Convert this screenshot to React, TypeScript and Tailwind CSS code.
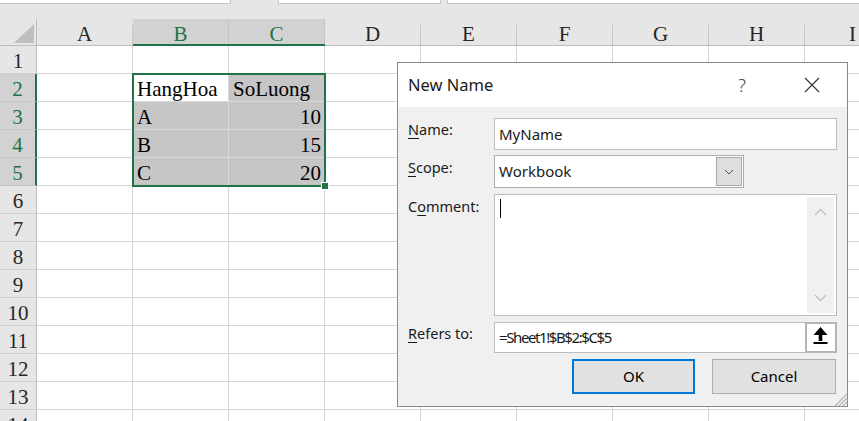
import React from "react";

const cols = ["A", "B", "C", "D", "E", "F", "G", "H", "I"];
const rows = Array.from({ length: 14 }, (_, i) => i + 1);

const data: Record<number, { B?: string; C?: string }> = {
  2: { B: "HangHoa", C: "SoLuong" },
  3: { B: "A", C: "10" },
  4: { B: "B", C: "15" },
  5: { B: "C", C: "20" },
};

const isSelCol = (c: string) => c === "B" || c === "C";
const isSelRow = (r: number) => r >= 2 && r <= 5;

function TopStrip() {
  return (
    <div className="flex h-[19px] bg-[#e6e6e6]">
      <div className="h-[4px] w-[231px] border-b border-r border-[#c6c6c6] bg-white" />
      <div className="w-[47px]" />
      <div className="h-[4px] w-[163px] border-b border-l border-r border-[#c6c6c6] bg-white" />
      <div className="w-[6px]" />
      <div className="h-[4px] flex-1 border-b border-l border-[#c6c6c6] bg-white" />
    </div>
  );
}

function HeaderRow() {
  return (
    <div className="flex">
      <div className="h-[27px] w-[37px] shrink-0 border-b border-r border-[#bdbdbd] bg-[#e6e6e6]">
        <svg width="36" height="26" className="block">
          <polygon points="34,5 34,24 14,24" fill="#bfbfbf" />
        </svg>
      </div>
      {cols.map((c) => {
        const sel = isSelCol(c);
        return (
          <div
            key={c}
            className={
              sel
                ? "flex h-[27px] w-[96px] shrink-0 border-b-2 border-[#217346] bg-[#d2d2d2] text-[#217346]"
                : "flex h-[27px] w-[96px] shrink-0 border-b border-[#bdbdbd] bg-[#e6e6e6] text-[#262626]"
            }
          >
            <span className="flex-1 text-center text-[21px] leading-[31px]">{c}</span>
            <span
              className={
                sel ? "h-full w-px self-end bg-[#c4c4c4]" : "h-[20px] w-px self-end bg-[#c6c6c6]"
              }
            />
          </div>
        );
      })}
    </div>
  );
}

function Row({ r }: { r: number }) {
  const selR = isSelRow(r);
  return (
    <div className="flex">
      <div
        className={
          selR
            ? "h-[28px] w-[37px] shrink-0 border-b border-r-2 border-b-[#c4c4c4] border-r-[#217346] bg-[#d2d2d2] text-center text-[21px] leading-[31px] text-[#217346]"
            : "h-[28px] w-[37px] shrink-0 border-b border-r border-b-[#cfcfcf] border-r-[#bdbdbd] bg-[#e6e6e6] text-center text-[21px] leading-[31px] text-[#262626]"
        }
      >
        {r}
      </div>
      {cols.map((c) => {
        const sel = selR && isSelCol(c);
        const active = r === 2 && c === "B";
        const val = c === "B" || c === "C" ? data[r]?.[c] : undefined;
        const numeric = val !== undefined && /^\d+$/.test(val);
        let cls = "h-[28px] w-[96px] shrink-0 border-b border-r border-[#d4d4d4] bg-white";
        if (sel && !active) cls = "h-[28px] w-[96px] shrink-0 border-b border-r border-[#dadada] bg-[#c6c6c6]";
        if (active) cls = "h-[28px] w-[96px] shrink-0 border-b border-r border-[#dadada] bg-white";
        return (
          <div key={c} className={cls}>
            {val && (
              <div
                className={
                  numeric
                    ? "pr-[3px] text-right text-[21px] leading-[31px] text-black"
                    : "pl-[4px] text-left text-[21px] leading-[31px] text-black"
                }
              >
                {val}
              </div>
            )}
          </div>
        );
      })}
    </div>
  );
}

function Underline({ children }: { children: React.ReactNode }) {
  return <span className="underline underline-offset-[3px]">{children}</span>;
}

function Dialog() {
  return (
    <div className="absolute left-[397px] top-[62px] flex h-[345px] w-[451px] flex-col border border-[#8a8a8a] bg-[#f0f0f0] font-['Noto_Sans','Segoe_UI',sans-serif] text-[#1a1a1a]">
      <div className="flex h-[44px] items-center bg-white pl-[10px] pr-[12px]">
        <span className="text-[16.5px]">New Name</span>
        <span className="ml-auto w-[20px] text-center text-[18px] font-light text-[#444]">?</span>
        <span className="ml-[37px] flex w-[46px] justify-center">
          <svg width="16" height="16" viewBox="0 0 16 16">
            <path d="M1 1 L15 15 M15 1 L1 15" stroke="#333" strokeWidth="1.1" fill="none" />
          </svg>
        </span>
      </div>

      <div className="flex flex-col px-[10px] pt-[11px]">
        <div className="flex h-[32px]">
          <span className="w-[86px] pt-[1px] text-[14.5px] leading-5">
            <Underline>N</Underline>ame:
          </span>
          <div className="flex flex-1 items-center border border-[#bcbcbc] bg-white pl-[4px] text-[15px]">
            MyName
          </div>
        </div>

        <div className="mt-[5px] flex h-[33px]">
          <span className="w-[86px] pt-[2px] text-[14.5px] leading-5">
            <Underline>S</Underline>cope:
          </span>
          <div className="flex w-[250px] items-center border border-[#adadad] bg-white pl-[4px] pr-px text-[15px]">
            <span className="flex-1">Workbook</span>
            <span className="flex h-[29px] w-[26px] items-center justify-center border border-[#a8a8a8] bg-[#dedede]">
              <svg width="10" height="6" viewBox="0 0 10 6">
                <path d="M1 1 L5 5 L9 1" stroke="#555" strokeWidth="1" fill="none" />
              </svg>
            </span>
          </div>
        </div>

        <div className="mt-[6px] flex h-[122px]">
          <span className="w-[86px] pt-[2px] text-[14.5px] leading-5">
            C<Underline>o</Underline>mment:
          </span>
          <div className="flex flex-1 border border-[#bcbcbc] bg-white p-[2px]">
            <div className="flex-1 pl-[3px] pt-[2px]">
              <div className="h-[19px] w-px bg-black" />
            </div>
            <div className="flex w-[27px] flex-col items-center justify-between bg-[#f0f0f0] py-[11px]">
              <svg width="13" height="8" viewBox="0 0 13 8">
                <path d="M1 7 L6.5 1.5 L12 7" stroke="#c2c2c2" strokeWidth="1.5" fill="none" />
              </svg>
              <svg width="13" height="8" viewBox="0 0 13 8">
                <path d="M1 1 L6.5 6.5 L12 1" stroke="#c2c2c2" strokeWidth="1.5" fill="none" />
              </svg>
            </div>
          </div>
        </div>

        <div className="mt-[6px] flex h-[31px]">
          <span className="w-[86px] pt-[1px] text-[14.5px] leading-5">
            <Underline>R</Underline>efers to:
          </span>
          <div className="flex flex-1 items-center border border-[#bcbcbc] bg-white pl-[4px] text-[15px] tracking-[-1.4px]">
            =Sheet1!$B$2:$C$5
          </div>
          <div className="-ml-px h-[31px] w-[32px] border-2 border-[#b4b4b4] bg-white">
            <svg width="28" height="27" viewBox="0 0 28 27" className="block">
              <path d="M6.5 11 L13.5 3 L20.5 11 Z" fill="#000" />
              <rect x="11.7" y="10" width="3.6" height="7" fill="#000" />
              <rect x="6.5" y="18" width="14" height="2" fill="#000" />
            </svg>
          </div>
        </div>

        <div className="mt-[6px] flex h-[35px] justify-end gap-[17px] pr-px">
          <button className="h-[35px] w-[123px] border-2 border-[#0078d7] bg-[#e1e1e1] text-[15px] text-black">
            OK
          </button>
          <button className="h-[35px] w-[124px] border border-[#adadad] bg-[#e1e1e1] text-[15px] text-black">
            Cancel
          </button>
        </div>
      </div>

      <svg width="13" height="13" viewBox="0 0 13 13" className="absolute bottom-0 right-0">
        <path d="M13 1 L1 13 M13 5 L5 13 M13 9 L9 13" stroke="#b3b3b3" strokeWidth="1.2" fill="none" />
      </svg>
    </div>
  );
}

export default function App() {
  return (
    <div className="relative h-[421px] w-[859px] overflow-hidden bg-white font-['Liberation_Serif','Times_New_Roman',serif]">
      <TopStrip />
      <HeaderRow />
      {rows.map((r) => (
        <Row key={r} r={r} />
      ))}

      {/* selection outline + fill handle */}
      <div className="pointer-events-none absolute left-[132px] top-[73px] h-[114px] w-[194px] border-2 border-[#217346]" />
      <div className="pointer-events-none absolute left-[321px] top-[182px] h-[8px] w-[8px] border border-white bg-[#217346]" />

      <Dialog />
    </div>
  );
}
